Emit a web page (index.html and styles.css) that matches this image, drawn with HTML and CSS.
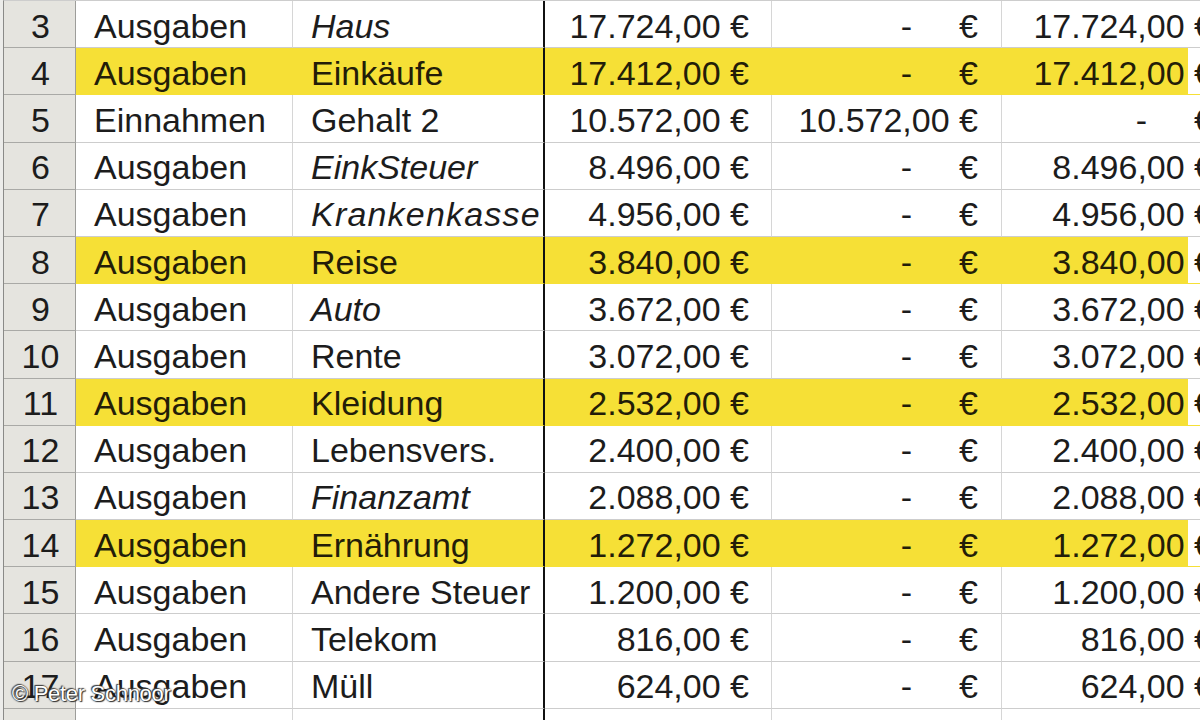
FILE: index.html
```html
<!DOCTYPE html>
<html lang="de">
<head>
<meta charset="utf-8">
<title>Ausgaben</title>
<link rel="stylesheet" href="styles.css">
</head>
<body>
<div class="sheet">
  <div class="row"><div class="rh">3</div><div class="c a">Ausgaben</div><div class="c b i">Haus</div><div class="c n">17.724,00 €</div><div class="c n"><span class="dash">-</span>€</div><div class="c n e">17.724,00 €</div></div>
  <div class="row hl"><div class="rh">4</div><div class="c a">Ausgaben</div><div class="c b">Einkäufe</div><div class="c n">17.412,00 €</div><div class="c n"><span class="dash">-</span>€</div><div class="c n e">17.412,00 €</div></div>
  <div class="row"><div class="rh">5</div><div class="c a">Einnahmen</div><div class="c b">Gehalt 2</div><div class="c n">10.572,00 €</div><div class="c n">10.572,00 €</div><div class="c n e"><span class="dash">-</span>€</div></div>
  <div class="row"><div class="rh">6</div><div class="c a">Ausgaben</div><div class="c b i">EinkSteuer</div><div class="c n">8.496,00 €</div><div class="c n"><span class="dash">-</span>€</div><div class="c n e">8.496,00 €</div></div>
  <div class="row"><div class="rh">7</div><div class="c a">Ausgaben</div><div class="c b i wide">Krankenkasse</div><div class="c n">4.956,00 €</div><div class="c n"><span class="dash">-</span>€</div><div class="c n e">4.956,00 €</div></div>
  <div class="row hl"><div class="rh">8</div><div class="c a">Ausgaben</div><div class="c b">Reise</div><div class="c n">3.840,00 €</div><div class="c n"><span class="dash">-</span>€</div><div class="c n e">3.840,00 €</div></div>
  <div class="row"><div class="rh">9</div><div class="c a">Ausgaben</div><div class="c b i">Auto</div><div class="c n">3.672,00 €</div><div class="c n"><span class="dash">-</span>€</div><div class="c n e">3.672,00 €</div></div>
  <div class="row"><div class="rh">10</div><div class="c a">Ausgaben</div><div class="c b">Rente</div><div class="c n">3.072,00 €</div><div class="c n"><span class="dash">-</span>€</div><div class="c n e">3.072,00 €</div></div>
  <div class="row hl"><div class="rh">11</div><div class="c a">Ausgaben</div><div class="c b">Kleidung</div><div class="c n">2.532,00 €</div><div class="c n"><span class="dash">-</span>€</div><div class="c n e">2.532,00 €</div></div>
  <div class="row"><div class="rh">12</div><div class="c a">Ausgaben</div><div class="c b">Lebensvers.</div><div class="c n">2.400,00 €</div><div class="c n"><span class="dash">-</span>€</div><div class="c n e">2.400,00 €</div></div>
  <div class="row"><div class="rh">13</div><div class="c a">Ausgaben</div><div class="c b i">Finanzamt</div><div class="c n">2.088,00 €</div><div class="c n"><span class="dash">-</span>€</div><div class="c n e">2.088,00 €</div></div>
  <div class="row hl"><div class="rh">14</div><div class="c a">Ausgaben</div><div class="c b">Ernährung</div><div class="c n">1.272,00 €</div><div class="c n"><span class="dash">-</span>€</div><div class="c n e">1.272,00 €</div></div>
  <div class="row"><div class="rh">15</div><div class="c a">Ausgaben</div><div class="c b">Andere Steuer</div><div class="c n">1.200,00 €</div><div class="c n"><span class="dash">-</span>€</div><div class="c n e">1.200,00 €</div></div>
  <div class="row"><div class="rh">16</div><div class="c a">Ausgaben</div><div class="c b">Telekom</div><div class="c n">816,00 €</div><div class="c n"><span class="dash">-</span>€</div><div class="c n e">816,00 €</div></div>
  <div class="row"><div class="rh">17</div><div class="c a">Ausgaben</div><div class="c b">Müll</div><div class="c n">624,00 €</div><div class="c n"><span class="dash">-</span>€</div><div class="c n e">624,00 €</div></div>
  <div class="row"><div class="rh">18</div><div class="c a">Ausgaben</div><div class="c b">Zeitung</div><div class="c n">576,00 €</div><div class="c n"><span class="dash">-</span>€</div><div class="c n e">576,00 €</div></div>
</div>
<div class="credit">© Peter Schnoor</div>
</body>
</html>
```

FILE: styles.css
```css
html, body {
  margin: 0;
  padding: 0;
  height: 720px;
  overflow: hidden;
  background: #ececea;
}

body {
  position: relative;
  font-family: "Liberation Sans", Arial, sans-serif;
  color: #1c1c1c;
}

.sheet {
  margin-left: 3px;
  border-left: 1px solid #8a8a88;
  border-top: 1px solid #cdcdcd;
  background: #ffffff;
  width: 1300px;
}

.row {
  display: grid;
  grid-template-columns: 72px 217px 252px 227px 230px 235px;
  height: 47.2px;
}

.rh,
.c {
  box-sizing: border-box;
  display: flex;
  align-items: center;
  padding-top: 4px;
  font-size: 34px;
  white-space: nowrap;
  overflow: hidden;
}

.rh {
  justify-content: center;
  background: #e5e4df;
  border-right: 1px solid #9d9d9a;
  border-bottom: 1px solid #a9a9a6;
  padding-left: 2px;
}

.c {
  border-right: 1px solid #d6d6d6;
  border-bottom: 1px solid #cdcdcd;
}

.a {
  padding-left: 18px;
}

.b {
  padding-left: 18px;
  border-right: 2px solid #111111;
}

.i {
  font-style: italic;
}

.wide {
  letter-spacing: 1.2px;
}

.n {
  justify-content: flex-end;
  padding-right: 22px;
}

.n + .n {
  padding-right: 23px;
}

.dash {
  margin-right: 47px;
}

.hl .c {
  background: #f6e036;
  border-bottom-color: #f6e036;
  border-right-color: #f6e036;
  color: #231d08;
}

.hl .b {
  border-right-color: #111111;
}

.hl .e {
  background: linear-gradient(to right, #f6e036 0, #f6e036 186px, #ffffff 186px);
}

.credit {
  position: absolute;
  left: 12px;
  bottom: 13px;
  font-size: 22px;
  color: #ffffff;
  text-shadow: 0 0 2px #222, 1px 1px 1px #333, -1px -1px 1px #444;
  letter-spacing: -0.3px;
}
```
